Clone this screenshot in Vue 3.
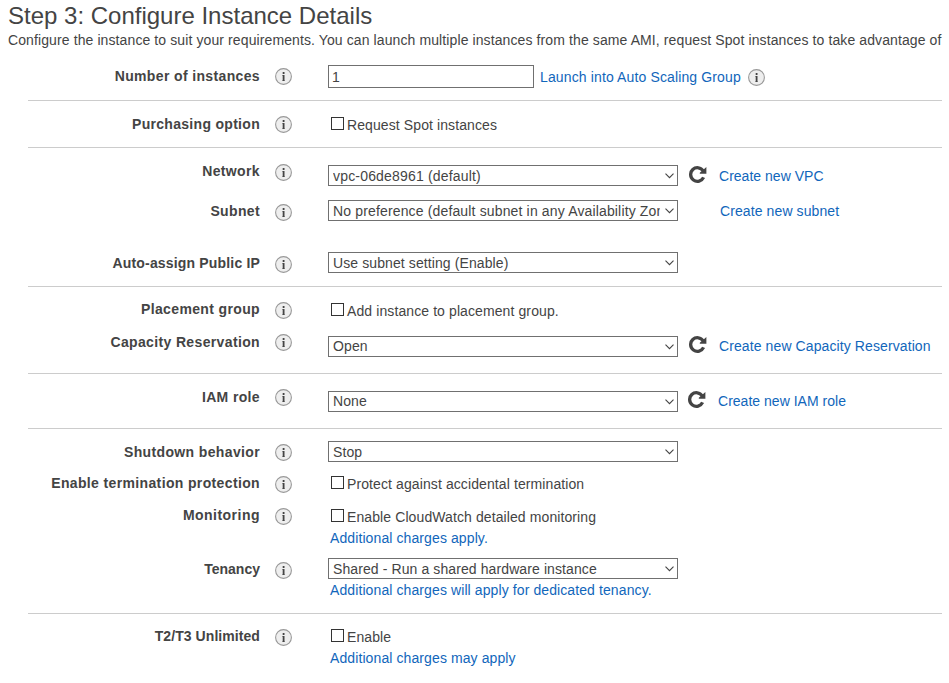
<script setup>
import { reactive, h } from 'vue'

const InfoIcon = () =>
  h('svg', { class: 'info', viewBox: '0 0 17 17', width: 17, height: 17, role: 'img', 'aria-label': 'Info' }, [
    h('circle', { cx: 8.5, cy: 8.5, r: 7.9, fill: '#eeeeee', stroke: '#999999', 'stroke-width': 1.1 }),
    h('path', { d: 'M7 7h1v1H7zM7 12h3v1H7z', fill: '#aaaaaa' }),
    h('path', { d: 'M7.7 4h1.8v2H7.7zM7.7 7h1.8v6H7.7z', fill: '#444444' })
  ])

const sections = reactive([
  [{ key: 'count', label: 'Number of instances', type: 'number', value: '1', link: 'Launch into Auto Scaling Group' }],
  [{ key: 'purchasing', label: 'Purchasing option', type: 'check', value: false, text: 'Request Spot instances' }],
  [
    { key: 'network', label: 'Network', type: 'select', text: 'vpc-06de8961 (default)', refresh: true, link: 'Create new VPC' },
    { key: 'subnet', label: 'Subnet', type: 'select', text: 'No preference (default subnet in any Availability Zone)', link: 'Create new subnet' },
    { key: 'public-ip', label: 'Auto-assign Public IP', type: 'select', text: 'Use subnet setting (Enable)' }
  ],
  [
    { key: 'placement', label: 'Placement group', type: 'check', value: false, text: 'Add instance to placement group.' },
    { key: 'capacity', label: 'Capacity Reservation', type: 'select', text: 'Open', refresh: true, link: 'Create new Capacity Reservation' }
  ],
  [{ key: 'iam', label: 'IAM role', type: 'select', text: 'None', refresh: true, link: 'Create new IAM role' }],
  [
    { key: 'shutdown', label: 'Shutdown behavior', type: 'select', text: 'Stop' },
    { key: 'termination', label: 'Enable termination protection', type: 'check', value: false, text: 'Protect against accidental termination' },
    { key: 'monitoring', label: 'Monitoring', type: 'check', value: false, text: 'Enable CloudWatch detailed monitoring', note: 'Additional charges apply.' },
    { key: 'tenancy', label: 'Tenancy', type: 'select', text: 'Shared - Run a shared hardware instance', note: 'Additional charges will apply for dedicated tenancy.' }
  ],
  [{ key: 'unlimited', label: 'T2/T3 Unlimited', type: 'check', value: false, text: 'Enable', note: 'Additional charges may apply' }]
])
</script>

<template>
  <main class="page">
    <h1>Step 3: Configure Instance Details</h1>
    <p class="intro">Configure the instance to suit your requirements. You can launch multiple instances from the same AMI, request Spot instances to take advantage of</p>
    <form class="form" @submit.prevent>
      <section v-for="(rows, i) in sections" :key="i" class="section">
        <div v-for="row in rows" :key="row.key" class="row" :class="[row.key, row.type]">
          <label class="label" :for="row.key"><span>{{ row.label }}</span></label>
          <InfoIcon class="row-info" />
          <div class="field">
            <div class="line">
              <input v-if="row.type === 'number'" :id="row.key" v-model="row.value" class="text-input" type="text" />
              <template v-else-if="row.type === 'check'">
                <input :id="row.key" v-model="row.value" class="checkbox" type="checkbox" />
                <span class="check-text">{{ row.text }}</span>
              </template>
              <div v-else class="select-box">
                <select :id="row.key"><option>{{ row.text }}</option></select>
                <svg class="chevron" width="9" height="6" viewBox="0 0 9 6"><path d="M.5.7l4 4 4-4" fill="none" stroke="#444" stroke-width="1.1" /></svg>
              </div>
              <svg v-if="row.refresh" class="refresh" width="18" height="17" viewBox="0 0 18 17">
                <path d="M14.2 4.9A6.8 6.8 0 1 0 14.6 11.4" fill="none" stroke="#444" stroke-width="3.3" />
                <path d="M17.4 1v6.7h-6.6v-1z" fill="#444" />
              </svg>
              <a v-if="row.link" class="link" href="#" @click.prevent>{{ row.link }}</a>
              <InfoIcon v-if="row.type === 'number'" class="link-info" />
            </div>
            <a v-if="row.note" class="note" href="#" @click.prevent>{{ row.note }}</a>
          </div>
        </div>
      </section>
    </form>
  </main>
</template>

<style>
body {
  background: #fff;
  overflow: hidden;
}
</style>

<style scoped>
.page {
  width: 949px;
  height: 683px;
  box-sizing: border-box;
  padding-top: 2px;
  overflow: hidden;
  background: #fff;
  color: #444;
  font: 14px/16px "Liberation Sans", Arial, sans-serif;
  letter-spacing: 0.1px;
}
h1 {
  margin: 0 0 0 8px;
  font-size: 24px;
  line-height: 28px;
  font-weight: 400;
  letter-spacing: 0;
}
.intro {
  margin: 2px 0 0 8px;
  white-space: nowrap;
  letter-spacing: 0.104px;
}
.form {
  width: 914px;
  margin-left: 28px;
  padding-top: 5px;
}
.section {
  padding-top: 11px;
  border-bottom: 1px solid #ccc;
}
.section:nth-child(4),
.section:nth-child(7) {
  padding-top: 10px;
}
.section:last-child {
  border-bottom: 0;
}
.row {
  --icon-top: 5px;
  --field-top: 1px;
  --text-top: 3px;
  --label-spacing: 0.36px;
  display: grid;
  grid-template-columns: 232px 17px 1fr;
  column-gap: 15px;
  align-items: start;
  white-space: nowrap;
}
.count { height: 36px; --icon-top: 4px; }
.purchasing { height: 35px; --icon-top: 4px; --field-top: 5px; --label-spacing: 0.3px; }
.network { height: 40px; --field-top: 6px; }
.subnet { height: 52px; }
.public-ip { height: 35px; --label-spacing: 0.17px; }
.placement { height: 33px; --field-top: 6px; }
.capacity,
.iam { height: 43px; --icon-top: 4px; --field-top: 6px; --text-top: 2px; }
.shutdown { height: 31px; --icon-top: 4px; }
.termination { height: 32px; --field-top: 5px; }
.monitoring { height: 54px; --field-top: 6px; --label-spacing: 0.48px; }
.tenancy { height: 56px; --label-spacing: 0; }
.unlimited { height: 45px; --field-top: 5px; --label-spacing: 0.07px; }

.label {
  padding-top: 4px;
  text-align: right;
  font-weight: 700;
  letter-spacing: var(--label-spacing);
}
.info {
  display: block;
  flex: none;
}
.row-info {
  margin-top: var(--icon-top);
}
.field {
  padding: var(--field-top) 0 0 21px;
}
.line {
  display: flex;
  align-items: flex-start;
}
input,
select {
  box-sizing: border-box;
  margin: 0;
  border: 1px solid #707070;
  border-radius: 0;
  background: #fff;
  color: #444;
  font: inherit;
  letter-spacing: inherit;
  appearance: none;
  outline: 0;
}
.text-input {
  width: 206px;
  height: 23px;
  padding: 3px 3px 2px;
}
.checkbox {
  width: 13px;
  height: 13px;
  margin-left: 3px;
  border-color: #333;
}
.checkbox:checked {
  box-shadow: inset 0 0 0 2px #fff;
  background: #333;
}
.check-text {
  margin-left: 3px;
}
.select-box {
  position: relative;
  width: 350px;
  height: 21px;
}
.network .select-box {
  letter-spacing: 0.18px;
}
.subnet .select-box {
  letter-spacing: 0.15px;
}
select {
  display: block;
  width: 350px;
  height: 21px;
  padding: calc(var(--text-top) - 1px) 17px calc(4px - var(--text-top)) 4px;
}
.chevron {
  position: absolute;
  right: 4px;
  top: 8px;
}
.refresh {
  margin: calc(var(--text-top) - 2px) 0 0 11px;
}
.link,
.note {
  color: #1166bb;
  text-decoration: none;
}
.link {
  margin: var(--text-top) 0 0 12px;
}
.network .link,
.iam .link {
  letter-spacing: 0.02px;
}
.iam .refresh {
  margin-left: 10px;
}
.subnet .link {
  margin-left: 42px;
}
.count .link {
  margin: 4px 0 0 6px;
  letter-spacing: 0.13px;
}
.link-info {
  margin: 4px 0 0 7px;
}
.note {
  display: block;
  width: max-content;
  margin: 5px 0 0 2px;
}
.tenancy .note {
  margin-top: 3px;
}
</style>
